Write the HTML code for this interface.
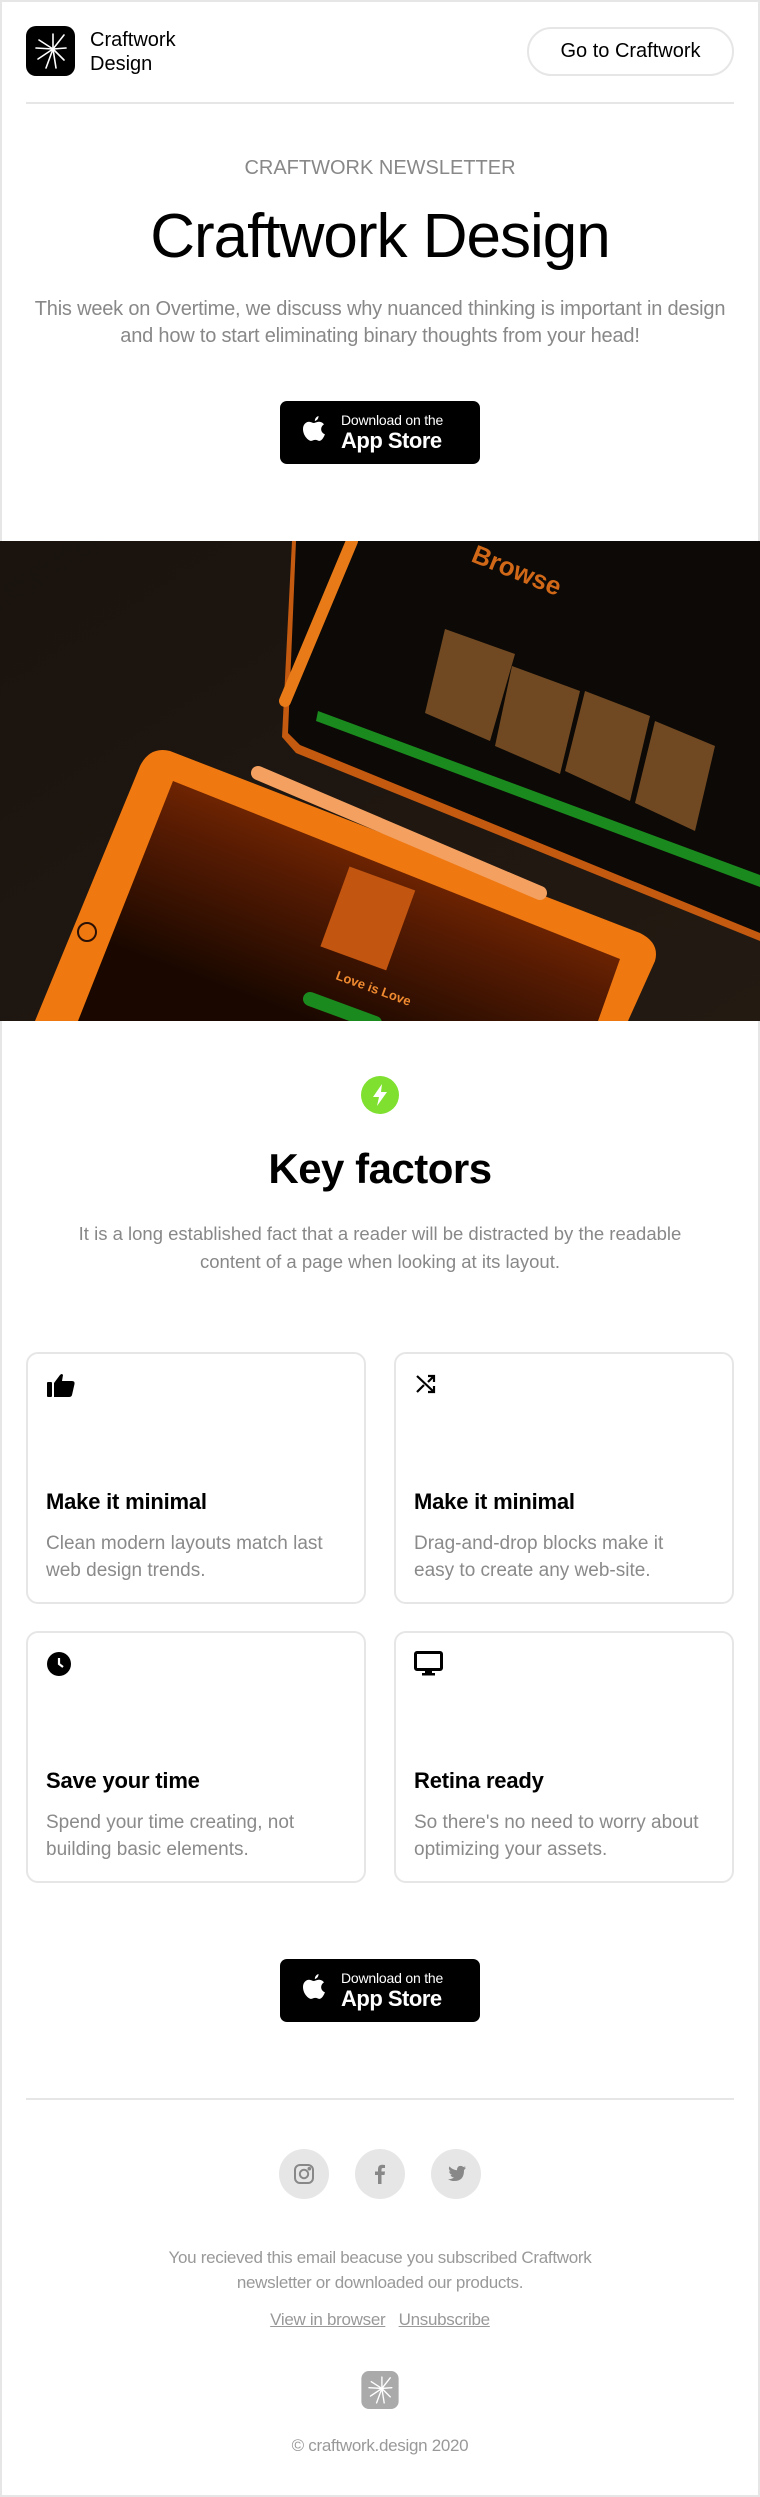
<!DOCTYPE html>
<html><head><meta charset="utf-8">
<style>
*{margin:0;padding:0;box-sizing:border-box}
body{width:760px;height:2497px;background:#fff;font-family:"Liberation Sans",Arial,sans-serif;position:relative;overflow:hidden}
.frame{position:absolute;left:0;top:0;width:760px;height:2497px;border:2px solid #e6e6e6}
.a{position:absolute}
.c{position:absolute;left:0;width:760px;text-align:center}
.btn{position:absolute;left:280px;width:200px;height:63px;background:#000;border-radius:7px;color:#fff}
.btn svg{position:absolute;left:22px;top:15px}
.btn .s{position:absolute;left:61px;top:11px;font-size:14px;letter-spacing:-0.2px}
.btn .b{position:absolute;left:61px;top:27px;font-size:22px;font-weight:bold;letter-spacing:-0.5px}
.card{position:absolute;width:340px;height:252px;border:2px solid #e6e6e6;border-radius:12px}
.card .ic{position:absolute;left:18px;top:18px}
.card h3{position:absolute;left:18px;top:135px;font-size:22px;font-weight:bold;color:#000;letter-spacing:-0.2px}
.card p{position:absolute;left:18px;top:176px;font-size:19px;line-height:27px;color:#8a8a8a;width:300px}
.soc{position:absolute;top:2149px;width:50px;height:50px;border-radius:50%;background:#e6e6e6}
.soc svg{position:absolute;left:13px;top:13px}
</style></head><body>
<div class="frame"></div>

<svg class="a" style="left:26px;top:26px" width="49" height="50" viewBox="0 0 49 50">
<rect width="49" height="50" rx="10" fill="#000"/>
<g stroke="#fff" stroke-width="1.6" stroke-linecap="round">
<line x1="27" y1="23" x2="38" y2="9"/><line x1="27" y1="23" x2="27" y2="8"/><line x1="27" y1="23" x2="13" y2="14"/>
<line x1="27" y1="23" x2="10" y2="22"/><line x1="27" y1="23" x2="12" y2="33"/><line x1="27" y1="23" x2="20" y2="42"/>
<line x1="27" y1="23" x2="30" y2="42"/><line x1="27" y1="23" x2="38" y2="34"/><line x1="27" y1="23" x2="40" y2="22"/>
</g></svg>
<div class="a" style="left:90px;top:28px;font-size:20px;line-height:24px;color:#000">Craftwork<br>Design</div>
<div class="a" style="left:527px;top:27px;width:207px;height:49px;border:2px solid #e6e6e6;border-radius:25px;font-size:20px;line-height:45px;text-align:center;color:#000">Go to Craftwork</div>
<div class="a" style="left:26px;top:102px;width:708px;height:2px;background:#e6e6e6"></div>

<div class="c" style="top:157px;font-size:20px;color:#888">CRAFTWORK NEWSLETTER</div>
<div class="c" style="top:201px;font-size:62px;color:#000;letter-spacing:-1px">Craftwork Design</div>
<div class="c" style="top:296px;font-size:20px;line-height:27px;color:#888;letter-spacing:-0.2px">This week on Overtime, we discuss why nuanced thinking is important in design<br>and how to start eliminating binary thoughts from your head!</div>

<div class="btn" style="top:401px">
<svg width="24" height="30" viewBox="0 0 24 30"><path fill="#fff" d="M16.5 0c.2 2-1.2 4.5-3.6 5 -.3-2 1.3-4.3 3.6-5zM12 7c1.2 0 3-1.4 5-1.2 1 0 3.4.4 5 2.6-4.3 2.7-3.4 8.3.9 9.9-.8 2.5-3 6.6-5.3 6.6-1.7 0-2.3-1-4.3-1s-2.8 1-4.3 1C6.6 24.9 1 19.9 1 13 1 7.9 4.6 5.7 7 5.7c2 0 3.5 1.3 5 1.3z"/></svg>
<div class="s">Download on the</div><div class="b">App Store</div></div>

<svg class="a" style="left:0;top:541px" width="760" height="480" viewBox="0 0 760 480">
<defs>
<linearGradient id="bg" x1="0" y1="0" x2="1" y2="1"><stop offset="0" stop-color="#1a130e"/><stop offset="1" stop-color="#231a12"/></linearGradient>
<linearGradient id="scr" x1="0.2" y1="0.8" x2="0.8" y2="0.1"><stop offset="0" stop-color="#1a0800"/><stop offset="0.5" stop-color="#5a1c02"/><stop offset="1" stop-color="#a23a02"/></linearGradient>
</defs>
<rect width="760" height="480" fill="url(#bg)"/>
<polygon points="292,0 760,0 760,400 296,212 282,196" fill="#c45a10"/>
<polygon points="296,0 760,0 760,392 300,204 288,192" fill="#0c0906"/>
<polygon points="318,170 760,334 760,346 316,180" fill="#1a8a1e"/>
<g fill="#8a5a2a" opacity="0.8">
<polygon points="445,88 515,113 490,200 425,172"/>
<polygon points="512,125 580,150 560,233 495,205"/>
<polygon points="585,150 650,175 630,260 565,230"/>
<polygon points="655,180 715,205 695,290 635,262"/>
</g>
<text x="470" y="20" fill="#d06818" font-size="26" font-family="Liberation Sans" font-weight="bold" transform="rotate(22 470 20)">Browse</text>
<line x1="352" y1="0" x2="285" y2="160" stroke="#e87a18" stroke-width="12" stroke-linecap="round"/>
<path d="M35,480 L140,225 Q150,205 170,210 L640,392 Q660,402 655,420 L628,480 Z" fill="#f07810"/>
<path d="M78,480 L173,240 L620,418 L598,480 Z" fill="url(#scr)"/>
<circle cx="87" cy="391" r="9" fill="none" stroke="#2a1005" stroke-width="2"/>
<rect x="333" y="335" width="70" height="85" fill="#c25510" transform="rotate(20 368 377)"/>
<text x="335" y="438" fill="#f08a30" font-size="13" font-family="Liberation Sans" font-weight="bold" transform="rotate(20 335 438)">Love is Love</text>
<line x1="310" y1="458" x2="375" y2="482" stroke="#1a8a1e" stroke-width="14" stroke-linecap="round"/>
<line x1="258" y1="232" x2="540" y2="352" stroke="#f4a060" stroke-width="14" stroke-linecap="round"/>
</svg>

<svg class="a" style="left:361px;top:1076px" width="38" height="38" viewBox="0 0 38 38"><circle cx="19" cy="19" r="19" fill="#7fe030"/><path d="M21 8 L12 21 H18 L16 30 L26 16 H20 Z" fill="#fff"/></svg>
<div class="c" style="top:1145px;font-size:42px;font-weight:bold;color:#000;letter-spacing:-0.5px">Key factors</div>
<div class="c" style="top:1220px;font-size:18.5px;line-height:28px;color:#888">It is a long established fact that a reader will be distracted by the readable<br>content of a page when looking at its layout.</div>

<div class="card" style="left:26px;top:1352px">
<svg class="ic" width="30" height="26" viewBox="0 0 30 26"><rect x="1" y="10" width="5" height="15" rx="1" fill="#000"/><path d="M8 11 L14 3 Q16 1 17 3 L16 9 H26 Q29 9 28.5 12 L26 23 Q25.5 25 23 25 H8 Z" fill="#000"/></svg>
<h3>Make it minimal</h3><p>Clean modern layouts match last<br>web design trends.</p></div>
<div class="card" style="left:394px;top:1352px">
<svg class="ic" width="24" height="24" viewBox="0 0 24 24" fill="none" stroke="#000" stroke-width="2.2"><path d="M3 4 L20 20 M3 20 L10 13 M14 10 L20 4 M14 4 H20 V10 M20 14 V20 H14"/></svg>
<h3>Make it minimal</h3><p>Drag-and-drop blocks make it<br>easy to create any web-site.</p></div>
<div class="card" style="left:26px;top:1631px">
<svg class="ic" width="28" height="28" viewBox="0 0 28 28"><circle cx="13" cy="13" r="12" fill="#000"/><path d="M13 7 V13 L17 16" stroke="#fff" stroke-width="2.2" fill="none"/></svg>
<h3>Save your time</h3><p>Spend your time creating, not<br>building basic elements.</p></div>
<div class="card" style="left:394px;top:1631px">
<svg class="ic" width="30" height="26" viewBox="0 0 30 26"><rect x="1.5" y="1.5" width="26" height="17" rx="1.5" fill="none" stroke="#000" stroke-width="3"/><rect x="11" y="19" width="7" height="3" fill="#000"/><rect x="8" y="22" width="13" height="2.5" fill="#000"/></svg>
<h3>Retina ready</h3><p>So there's no need to worry about<br>optimizing your assets.</p></div>

<div class="btn" style="top:1959px">
<svg width="24" height="30" viewBox="0 0 24 30"><path fill="#fff" d="M16.5 0c.2 2-1.2 4.5-3.6 5 -.3-2 1.3-4.3 3.6-5zM12 7c1.2 0 3-1.4 5-1.2 1 0 3.4.4 5 2.6-4.3 2.7-3.4 8.3.9 9.9-.8 2.5-3 6.6-5.3 6.6-1.7 0-2.3-1-4.3-1s-2.8 1-4.3 1C6.6 24.9 1 19.9 1 13 1 7.9 4.6 5.7 7 5.7c2 0 3.5 1.3 5 1.3z"/></svg>
<div class="s">Download on the</div><div class="b">App Store</div></div>

<div class="a" style="left:26px;top:2098px;width:708px;height:2px;background:#e6e6e6"></div>

<div class="soc" style="left:279px"><svg width="24" height="24" viewBox="0 0 24 24" fill="none" stroke="#888" stroke-width="2"><rect x="3" y="3" width="18" height="18" rx="5"/><circle cx="12" cy="12" r="4.2"/><circle cx="17.3" cy="6.7" r="0.8" fill="#888"/></svg></div>
<div class="soc" style="left:355px"><svg width="24" height="24" viewBox="0 0 24 24"><path d="M13.5 22 V13 H16.5 L17 9.5 H13.5 V7.5 Q13.5 6 15 6 H17 V3 Q15.5 2.8 14.3 2.8 Q10 2.8 10 7 V9.5 H7 V13 H10 V22 Z" fill="#888"/></svg></div>
<div class="soc" style="left:431px"><svg width="24" height="24" viewBox="0 0 24 24"><path d="M22 5.5 Q21 6 20 6.1 Q21.1 5.4 21.5 4.2 Q20.4 4.8 19.3 5 Q18.2 3.9 16.6 3.9 Q13 4 13 8.2 Q8.6 8 5.4 4.4 Q4 7.4 6.6 9.5 Q5.8 9.5 5.2 9.1 Q5.3 12 8.1 12.8 Q7.3 13 6.5 12.9 Q7.3 15.4 10 15.5 Q7.5 17.4 4 17.2 Q7 19 10.3 19 Q20 19 20 8.5 V8 Q21.3 7 22 5.5 Z" fill="#888"/></svg></div>

<div class="c" style="top:2245px;font-size:17px;line-height:25px;color:#999;letter-spacing:-0.3px">You recieved this email beacuse you subscribed Craftwork<br>newsletter or downloaded our products.</div>
<div class="c" style="top:2310px;font-size:17px;color:#999;letter-spacing:-0.3px"><span style="text-decoration:underline">View in browser</span>&nbsp;&nbsp;&nbsp;<span style="text-decoration:underline">Unsubscribe</span></div>

<svg class="a" style="left:361px;top:2371px" width="38" height="38" viewBox="0 0 49 50">
<rect width="49" height="50" rx="10" fill="#aaa"/>
<g stroke="#fff" stroke-width="1.8" stroke-linecap="round">
<line x1="27" y1="23" x2="38" y2="9"/><line x1="27" y1="23" x2="27" y2="8"/><line x1="27" y1="23" x2="13" y2="14"/>
<line x1="27" y1="23" x2="10" y2="22"/><line x1="27" y1="23" x2="12" y2="33"/><line x1="27" y1="23" x2="20" y2="42"/>
<line x1="27" y1="23" x2="30" y2="42"/><line x1="27" y1="23" x2="38" y2="34"/><line x1="27" y1="23" x2="40" y2="22"/>
</g></svg>
<div class="c" style="top:2436px;font-size:17px;color:#999;letter-spacing:-0.3px">© craftwork.design 2020</div>
</body></html>
